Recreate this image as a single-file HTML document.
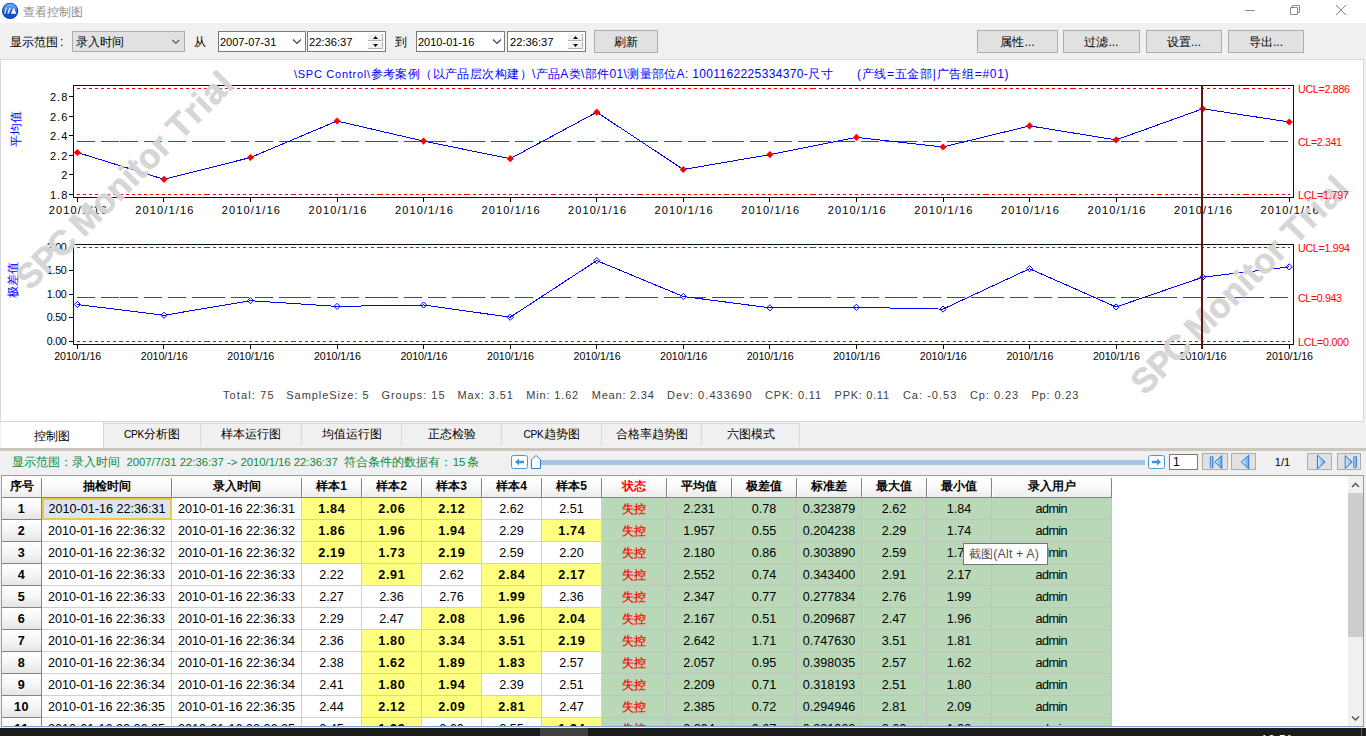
<!DOCTYPE html>
<html lang="zh"><head><meta charset="utf-8"><title>查看控制图</title>
<style>
*{box-sizing:border-box}
html,body{margin:0;padding:0}
body{width:1366px;height:736px;overflow:hidden;background:#f0f0f0;position:relative;font-family:"Liberation Sans",sans-serif;font-size:12px;color:#000}
.abs{position:absolute}
.t{position:absolute;white-space:nowrap;line-height:14px;height:14px}
.btn{position:absolute;background:#e1e1e1;border:1px solid #adadad;text-align:center;white-space:nowrap}
.inp{position:absolute;background:#fff;border:1px solid #7a7a7a;white-space:nowrap}
.tab{position:absolute;top:423px;height:23px;border-top:1px solid #d9d9d9;border-right:1px solid #d9d9d9;text-align:center;line-height:21px;white-space:nowrap}
.hc{position:absolute;top:476px;height:22px;padding-right:1px;border-bottom:1px solid #848484;background:linear-gradient(#ffffff 0%,#fbfbfb 45%,#ececec 100%);text-align:center;font-weight:bold;line-height:20px;white-space:nowrap;box-shadow:inset 1px 0 0 #fff}
.hc::after{content:'';position:absolute;right:0;top:2px;bottom:0;width:1px;background:#848484}
.c{position:absolute;height:22px;border-right:1px solid #d0d0d0;border-bottom:1px solid #d0d0d0;text-align:center;line-height:23px;white-space:nowrap;background:#fff;font-size:12.6px}
.c.y{background:#ffff80;font-weight:bold;letter-spacing:.7px;padding-left:.7px}
.c.g{background:#b8d8b8;border-color:#c4c2c2}
.c.r{color:#ff0000;font-size:12px;-webkit-text-stroke:.25px #ff0000}
.c.rh{background:linear-gradient(#ffffff 0%,#f6f6f6 50%,#e6e6e6 100%);border-right:1px solid #848484;border-bottom:1px solid #848484;font-weight:bold;letter-spacing:.5px}
.c.sel{background:#dce6f2;border:2px solid #f0c840;line-height:19px}
</style></head><body>

<div class="abs" style="left:0;top:0;width:1366px;height:23px;background:#fff"></div>
<svg class="abs" style="left:0;top:0" width="24" height="23" viewBox="0 0 24 23">
<defs><linearGradient id="ig" x1="0" y1="0" x2="0" y2="1"><stop offset="0" stop-color="#7fb0f6"/><stop offset=".45" stop-color="#2f72e2"/><stop offset=".62" stop-color="#0a4fd2"/><stop offset="1" stop-color="#0a44c0"/></linearGradient>
<clipPath id="ic"><circle cx="10.1" cy="10.9" r="7.6"/></clipPath></defs>
<circle cx="10.1" cy="10.9" r="8.1" fill="#0b3c9e"/>
<circle cx="10.1" cy="10.9" r="7.3" fill="url(#ig)"/>
<rect x="2" y="13.8" width="17" height="6" fill="#0a50d4" clip-path="url(#ic)"/>
<path d="M4 13.8L5.9 7.8H7L5.3 13.8Z M7.2 13.8L9.3 7.8H10.9L8.8 13.8Z" fill="#e9f0fb"/>
<path d="M10.8 13.8L13.75 7.6L16.3 13.8Z" fill="#ffffff"/>
</svg>
<div class="t" style="left:23px;top:4.8px;color:#8e8e8e;font-size:12px">查看控制图</div>
<svg class="abs" style="left:1240px;top:0" width="126" height="23" viewBox="1240 0 126 23" fill="none" stroke="#8a8a8a" stroke-width="1">
<path d="M1245 10.5H1255"/>
<path d="M1290.5 7.5h7v7h-7z M1292.5 7.5v-2h7v7h-2"/>
<path d="M1336 5L1346 15M1346 5L1336 15"/>
</svg>
<div class="t" style="left:10px;top:35px;font-size:12px">显示范围<span style="margin-left:2px">:</span></div>
<div class="btn" style="left:72px;top:31px;width:113px;height:21px;text-align:left;padding-left:3px;line-height:21px">录入时间</div>
<div class="t" style="left:194px;top:35px">从</div>
<div class="inp" style="left:218px;top:31px;width:88px;height:21px;padding-left:1px;line-height:21px;font-size:11px">2007-07-31</div>
<div class="inp" style="left:307px;top:31px;width:79px;height:21px;padding-left:1px;line-height:21px;font-size:11.2px">22:36:37</div>
<div class="t" style="left:395px;top:35px">到</div>
<div class="inp" style="left:416px;top:31px;width:89px;height:21px;padding-left:1px;line-height:21px;font-size:11px">2010-01-16</div>
<div class="inp" style="left:507px;top:31px;width:79px;height:21px;padding-left:2px;line-height:21px;font-size:11.2px">22:36:37</div>
<div class="btn" style="left:594px;top:30px;width:64px;height:23px;line-height:23px">刷新</div>
<div class="btn" style="left:977px;top:30px;width:81px;height:23px;line-height:23px">属性...</div>
<div class="btn" style="left:1063px;top:30px;width:77px;height:23px;line-height:23px">过滤...</div>
<div class="btn" style="left:1146px;top:30px;width:76px;height:23px;line-height:23px">设置...</div>
<div class="btn" style="left:1228px;top:30px;width:76px;height:23px;line-height:23px">导出...</div>
<svg class="abs" style="left:0;top:23px" width="700" height="36" viewBox="0 23 700 36" fill="none">
<path d="M172.3 39.8l3.5 3.5l3.5-3.5" stroke="#444" stroke-width="1.15"/>
<path d="M293 39.5l4 4l4-4" stroke="#444" stroke-width="1.15"/>
<path d="M493 39.5l4 4l4-4" stroke="#444" stroke-width="1.15"/>
<g shape-rendering="crispEdges">
<rect x="368" y="34" width="15" height="7" fill="#f0f0f0"/><path d="M368 40.5h15M382.5 34v7" stroke="#b0b0b0"/>
<rect x="368" y="42" width="15" height="7" fill="#f0f0f0"/><path d="M368 48.5h15M382.5 42v7" stroke="#b0b0b0"/>
<rect x="568" y="34" width="15" height="7" fill="#f0f0f0"/><path d="M568 40.5h15M582.5 34v7" stroke="#b0b0b0"/>
<rect x="568" y="42" width="15" height="7" fill="#f0f0f0"/><path d="M568 48.5h15M582.5 42v7" stroke="#b0b0b0"/>
</g><g>
<path d="M373 39l2.5-3l2.5 3z M373 44l2.5 3l2.5-3z" fill="#111"/>
<path d="M573 39l2.5-3l2.5 3z M573 44l2.5 3l2.5-3z" fill="#111"/>
</g>
</svg>
<div class="abs" style="left:0;top:59px;width:1364px;height:363px;background:#fff;border:1px solid #d9d9d9"></div>
<svg class="abs" style="left:0;top:60px" width="1366" height="361" viewBox="0 60 1366 361" font-family='"Liberation Sans", sans-serif'>
<text x="294.0" y="77.7" font-size="11.00" fill="#0000ff" text-anchor="start" textLength="76.0" lengthAdjust="spacing" >\SPC Control\</text>
<text x="370.5" y="78.0" font-size="12.00" fill="#0000ff" text-anchor="start" textLength="161.0" lengthAdjust="spacing" >参考案例（以产品层次构建）</text>
<text x="532.0" y="78.0" font-size="12.00" fill="#0000ff" text-anchor="start" textLength="300.5" lengthAdjust="spacing" >\产品A类\部件01\测量部位A: 1001162225334370-尺寸</text>
<text x="857.0" y="78.0" font-size="12.00" fill="#0000ff" text-anchor="start" textLength="151.5" lengthAdjust="spacing" >(产线=五金部|广告组=#01)</text>
<rect x="73.5" y="85.5" width="1220" height="112.0" fill="none" stroke="#111" stroke-width="1" shape-rendering="crispEdges"/>
<path d="M69 96.5H73" stroke="#000" stroke-width="1" shape-rendering="crispEdges"/>
<text x="67.3" y="101.2" font-size="11.00" fill="#000" text-anchor="end" textLength="17.3" lengthAdjust="spacing" >2.8</text>
<path d="M69 116.5H73" stroke="#000" stroke-width="1" shape-rendering="crispEdges"/>
<text x="67.3" y="121.2" font-size="11.00" fill="#000" text-anchor="end" textLength="17.3" lengthAdjust="spacing" >2.6</text>
<path d="M69 135.5H73" stroke="#000" stroke-width="1" shape-rendering="crispEdges"/>
<text x="67.3" y="140.2" font-size="11.00" fill="#000" text-anchor="end" textLength="17.3" lengthAdjust="spacing" >2.4</text>
<path d="M69 155.5H73" stroke="#000" stroke-width="1" shape-rendering="crispEdges"/>
<text x="67.3" y="160.2" font-size="11.00" fill="#000" text-anchor="end" textLength="17.3" lengthAdjust="spacing" >2.2</text>
<path d="M69 174.5H73" stroke="#000" stroke-width="1" shape-rendering="crispEdges"/>
<text x="67.3" y="179.2" font-size="11.00" fill="#000" text-anchor="end" textLength="6.5" lengthAdjust="spacing" >2</text>
<path d="M69 194.5H73" stroke="#000" stroke-width="1" shape-rendering="crispEdges"/>
<text x="67.3" y="199.2" font-size="11.00" fill="#000" text-anchor="end" textLength="17.3" lengthAdjust="spacing" >1.8</text>
<path d="M77.5 198.0V202.0" stroke="#000" stroke-width="1" shape-rendering="crispEdges"/>
<text x="77.7" y="214.0" font-size="11.00" text-anchor="middle" textLength="58.0" lengthAdjust="spacing">2010/1/16</text>
<path d="M163.5 198.0V202.0" stroke="#000" stroke-width="1" shape-rendering="crispEdges"/>
<text x="164.3" y="214.0" font-size="11.00" text-anchor="middle" textLength="58.0" lengthAdjust="spacing">2010/1/16</text>
<path d="M250.5 198.0V202.0" stroke="#000" stroke-width="1" shape-rendering="crispEdges"/>
<text x="250.8" y="214.0" font-size="11.00" text-anchor="middle" textLength="58.0" lengthAdjust="spacing">2010/1/16</text>
<path d="M337.5 198.0V202.0" stroke="#000" stroke-width="1" shape-rendering="crispEdges"/>
<text x="337.4" y="214.0" font-size="11.00" text-anchor="middle" textLength="58.0" lengthAdjust="spacing">2010/1/16</text>
<path d="M423.5 198.0V202.0" stroke="#000" stroke-width="1" shape-rendering="crispEdges"/>
<text x="423.9" y="214.0" font-size="11.00" text-anchor="middle" textLength="58.0" lengthAdjust="spacing">2010/1/16</text>
<path d="M510.5 198.0V202.0" stroke="#000" stroke-width="1" shape-rendering="crispEdges"/>
<text x="510.5" y="214.0" font-size="11.00" text-anchor="middle" textLength="58.0" lengthAdjust="spacing">2010/1/16</text>
<path d="M596.5 198.0V202.0" stroke="#000" stroke-width="1" shape-rendering="crispEdges"/>
<text x="597.1" y="214.0" font-size="11.00" text-anchor="middle" textLength="58.0" lengthAdjust="spacing">2010/1/16</text>
<path d="M683.5 198.0V202.0" stroke="#000" stroke-width="1" shape-rendering="crispEdges"/>
<text x="683.6" y="214.0" font-size="11.00" text-anchor="middle" textLength="58.0" lengthAdjust="spacing">2010/1/16</text>
<path d="M769.5 198.0V202.0" stroke="#000" stroke-width="1" shape-rendering="crispEdges"/>
<text x="770.2" y="214.0" font-size="11.00" text-anchor="middle" textLength="58.0" lengthAdjust="spacing">2010/1/16</text>
<path d="M856.5 198.0V202.0" stroke="#000" stroke-width="1" shape-rendering="crispEdges"/>
<text x="856.7" y="214.0" font-size="11.00" text-anchor="middle" textLength="58.0" lengthAdjust="spacing">2010/1/16</text>
<path d="M943.5 198.0V202.0" stroke="#000" stroke-width="1" shape-rendering="crispEdges"/>
<text x="943.3" y="214.0" font-size="11.00" text-anchor="middle" textLength="58.0" lengthAdjust="spacing">2010/1/16</text>
<path d="M1029.5 198.0V202.0" stroke="#000" stroke-width="1" shape-rendering="crispEdges"/>
<text x="1029.9" y="214.0" font-size="11.00" text-anchor="middle" textLength="58.0" lengthAdjust="spacing">2010/1/16</text>
<path d="M1116.5 198.0V202.0" stroke="#000" stroke-width="1" shape-rendering="crispEdges"/>
<text x="1116.4" y="214.0" font-size="11.00" text-anchor="middle" textLength="58.0" lengthAdjust="spacing">2010/1/16</text>
<path d="M1202.5 198.0V202.0" stroke="#000" stroke-width="1" shape-rendering="crispEdges"/>
<text x="1203.0" y="214.0" font-size="11.00" text-anchor="middle" textLength="58.0" lengthAdjust="spacing">2010/1/16</text>
<path d="M1289.5 198.0V202.0" stroke="#000" stroke-width="1" shape-rendering="crispEdges"/>
<text x="1289.5" y="214.0" font-size="11.00" text-anchor="middle" textLength="58.0" lengthAdjust="spacing">2010/1/16</text>
<path d="M77.4 88.5H120.3M120.3 88.5H206.9M206.9 88.5H293.4M293.4 88.5H380.0M380.0 88.5H466.5M466.5 88.5H553.1M553.1 88.5H639.7M639.7 88.5H726.2M726.2 88.5H812.8M812.8 88.5H899.3M899.3 88.5H985.9M985.9 88.5H1072.5M1072.5 88.5H1159.0M1159.0 88.5H1245.6M1245.6 88.5H1289.6" stroke="#ff0000" stroke-width="1" stroke-dasharray="3 3" shape-rendering="crispEdges" fill="none"/>
<path d="M77.4 194.5H120.3M120.3 194.5H206.9M206.9 194.5H293.4M293.4 194.5H380.0M380.0 194.5H466.5M466.5 194.5H553.1M553.1 194.5H639.7M639.7 194.5H726.2M726.2 194.5H812.8M812.8 194.5H899.3M899.3 194.5H985.9M985.9 194.5H1072.5M1072.5 194.5H1159.0M1159.0 194.5H1245.6M1245.6 194.5H1289.6" stroke="#ff0000" stroke-width="1" stroke-dasharray="3 3" shape-rendering="crispEdges" fill="none"/>
<path d="M77.4 141.5H120.3M120.3 141.5H206.9M206.9 141.5H293.4M293.4 141.5H380.0M380.0 141.5H466.5M466.5 141.5H553.1M553.1 141.5H639.7M639.7 141.5H726.2M726.2 141.5H812.8M812.8 141.5H899.3M899.3 141.5H985.9M985.9 141.5H1072.5M1072.5 141.5H1159.0M1159.0 141.5H1245.6M1245.6 141.5H1289.6" stroke="#ff0000" stroke-width="1" stroke-dasharray="18 6" shape-rendering="crispEdges" fill="none"/>
<path d="M77.4 152.5 L164.0 179.3 L250.5 157.5 L337.1 121.0 L423.6 141.1 L510.2 158.7 L596.8 112.2 L683.3 169.5 L769.9 154.6 L856.4 137.4 L943.0 147.0 L1029.6 125.9 L1116.1 139.9 L1202.7 108.8 L1289.2 122.0" fill="none" stroke="#0000ff" stroke-width="1" shape-rendering="crispEdges"/>
<path d="M77.4 148.9l3.6 3.6l-3.6 3.6l-3.6-3.6z" fill="#ff0000"/>
<path d="M164.0 175.7l3.6 3.6l-3.6 3.6l-3.6-3.6z" fill="#ff0000"/>
<path d="M250.5 153.9l3.6 3.6l-3.6 3.6l-3.6-3.6z" fill="#ff0000"/>
<path d="M337.1 117.4l3.6 3.6l-3.6 3.6l-3.6-3.6z" fill="#ff0000"/>
<path d="M423.6 137.5l3.6 3.6l-3.6 3.6l-3.6-3.6z" fill="#ff0000"/>
<path d="M510.2 155.1l3.6 3.6l-3.6 3.6l-3.6-3.6z" fill="#ff0000"/>
<path d="M596.8 108.6l3.6 3.6l-3.6 3.6l-3.6-3.6z" fill="#ff0000"/>
<path d="M683.3 165.9l3.6 3.6l-3.6 3.6l-3.6-3.6z" fill="#ff0000"/>
<path d="M769.9 151.0l3.6 3.6l-3.6 3.6l-3.6-3.6z" fill="#ff0000"/>
<path d="M856.4 133.8l3.6 3.6l-3.6 3.6l-3.6-3.6z" fill="#ff0000"/>
<path d="M943.0 143.4l3.6 3.6l-3.6 3.6l-3.6-3.6z" fill="#ff0000"/>
<path d="M1029.6 122.3l3.6 3.6l-3.6 3.6l-3.6-3.6z" fill="#ff0000"/>
<path d="M1116.1 136.3l3.6 3.6l-3.6 3.6l-3.6-3.6z" fill="#ff0000"/>
<path d="M1202.7 105.2l3.6 3.6l-3.6 3.6l-3.6-3.6z" fill="#ff0000"/>
<path d="M1289.2 118.4l3.6 3.6l-3.6 3.6l-3.6-3.6z" fill="#ff0000"/>
<rect x="73.5" y="244.5" width="1220" height="100.0" fill="none" stroke="#111" stroke-width="1" shape-rendering="crispEdges"/>
<path d="M69 247.5H73" stroke="#000" stroke-width="1" shape-rendering="crispEdges"/>
<text x="66.8" y="251.3" font-size="10.67" fill="#000" text-anchor="end" textLength="20.0" lengthAdjust="spacing" >2.00</text>
<path d="M69 270.5H73" stroke="#000" stroke-width="1" shape-rendering="crispEdges"/>
<text x="66.8" y="274.3" font-size="10.67" fill="#000" text-anchor="end" textLength="20.0" lengthAdjust="spacing" >1.50</text>
<path d="M69 294.5H73" stroke="#000" stroke-width="1" shape-rendering="crispEdges"/>
<text x="66.8" y="298.3" font-size="10.67" fill="#000" text-anchor="end" textLength="20.0" lengthAdjust="spacing" >1.00</text>
<path d="M69 317.5H73" stroke="#000" stroke-width="1" shape-rendering="crispEdges"/>
<text x="66.8" y="321.3" font-size="10.67" fill="#000" text-anchor="end" textLength="20.0" lengthAdjust="spacing" >0.50</text>
<path d="M69 341.5H73" stroke="#000" stroke-width="1" shape-rendering="crispEdges"/>
<text x="66.8" y="345.3" font-size="10.67" fill="#000" text-anchor="end" textLength="20.0" lengthAdjust="spacing" >0.00</text>
<path d="M77.5 345.0V349.0" stroke="#000" stroke-width="1" shape-rendering="crispEdges"/>
<text x="77.7" y="360.4" font-size="10.67" text-anchor="middle" textLength="47.0" lengthAdjust="spacing">2010/1/16</text>
<path d="M163.5 345.0V349.0" stroke="#000" stroke-width="1" shape-rendering="crispEdges"/>
<text x="164.3" y="360.4" font-size="10.67" text-anchor="middle" textLength="47.0" lengthAdjust="spacing">2010/1/16</text>
<path d="M250.5 345.0V349.0" stroke="#000" stroke-width="1" shape-rendering="crispEdges"/>
<text x="250.8" y="360.4" font-size="10.67" text-anchor="middle" textLength="47.0" lengthAdjust="spacing">2010/1/16</text>
<path d="M337.5 345.0V349.0" stroke="#000" stroke-width="1" shape-rendering="crispEdges"/>
<text x="337.4" y="360.4" font-size="10.67" text-anchor="middle" textLength="47.0" lengthAdjust="spacing">2010/1/16</text>
<path d="M423.5 345.0V349.0" stroke="#000" stroke-width="1" shape-rendering="crispEdges"/>
<text x="423.9" y="360.4" font-size="10.67" text-anchor="middle" textLength="47.0" lengthAdjust="spacing">2010/1/16</text>
<path d="M510.5 345.0V349.0" stroke="#000" stroke-width="1" shape-rendering="crispEdges"/>
<text x="510.5" y="360.4" font-size="10.67" text-anchor="middle" textLength="47.0" lengthAdjust="spacing">2010/1/16</text>
<path d="M596.5 345.0V349.0" stroke="#000" stroke-width="1" shape-rendering="crispEdges"/>
<text x="597.1" y="360.4" font-size="10.67" text-anchor="middle" textLength="47.0" lengthAdjust="spacing">2010/1/16</text>
<path d="M683.5 345.0V349.0" stroke="#000" stroke-width="1" shape-rendering="crispEdges"/>
<text x="683.6" y="360.4" font-size="10.67" text-anchor="middle" textLength="47.0" lengthAdjust="spacing">2010/1/16</text>
<path d="M769.5 345.0V349.0" stroke="#000" stroke-width="1" shape-rendering="crispEdges"/>
<text x="770.2" y="360.4" font-size="10.67" text-anchor="middle" textLength="47.0" lengthAdjust="spacing">2010/1/16</text>
<path d="M856.5 345.0V349.0" stroke="#000" stroke-width="1" shape-rendering="crispEdges"/>
<text x="856.7" y="360.4" font-size="10.67" text-anchor="middle" textLength="47.0" lengthAdjust="spacing">2010/1/16</text>
<path d="M943.5 345.0V349.0" stroke="#000" stroke-width="1" shape-rendering="crispEdges"/>
<text x="943.3" y="360.4" font-size="10.67" text-anchor="middle" textLength="47.0" lengthAdjust="spacing">2010/1/16</text>
<path d="M1029.5 345.0V349.0" stroke="#000" stroke-width="1" shape-rendering="crispEdges"/>
<text x="1029.9" y="360.4" font-size="10.67" text-anchor="middle" textLength="47.0" lengthAdjust="spacing">2010/1/16</text>
<path d="M1116.5 345.0V349.0" stroke="#000" stroke-width="1" shape-rendering="crispEdges"/>
<text x="1116.4" y="360.4" font-size="10.67" text-anchor="middle" textLength="47.0" lengthAdjust="spacing">2010/1/16</text>
<path d="M1202.5 345.0V349.0" stroke="#000" stroke-width="1" shape-rendering="crispEdges"/>
<text x="1203.0" y="360.4" font-size="10.67" text-anchor="middle" textLength="47.0" lengthAdjust="spacing">2010/1/16</text>
<path d="M1289.5 345.0V349.0" stroke="#000" stroke-width="1" shape-rendering="crispEdges"/>
<text x="1289.5" y="360.4" font-size="10.67" text-anchor="middle" textLength="47.0" lengthAdjust="spacing">2010/1/16</text>
<path d="M77.4 247.5H120.3M120.3 247.5H206.9M206.9 247.5H293.4M293.4 247.5H380.0M380.0 247.5H466.5M466.5 247.5H553.1M553.1 247.5H639.7M639.7 247.5H726.2M726.2 247.5H812.8M812.8 247.5H899.3M899.3 247.5H985.9M985.9 247.5H1072.5M1072.5 247.5H1159.0M1159.0 247.5H1245.6M1245.6 247.5H1289.6" stroke="#ff0000" stroke-width="1" stroke-dasharray="3 3" shape-rendering="crispEdges" fill="none"/>
<path d="M77.4 341.5H120.3M120.3 341.5H206.9M206.9 341.5H293.4M293.4 341.5H380.0M380.0 341.5H466.5M466.5 341.5H553.1M553.1 341.5H639.7M639.7 341.5H726.2M726.2 341.5H812.8M812.8 341.5H899.3M899.3 341.5H985.9M985.9 341.5H1072.5M1072.5 341.5H1159.0M1159.0 341.5H1245.6M1245.6 341.5H1289.6" stroke="#ff0000" stroke-width="1" stroke-dasharray="3 3" shape-rendering="crispEdges" fill="none"/>
<path d="M77.4 297.5H120.3M120.3 297.5H206.9M206.9 297.5H293.4M293.4 297.5H380.0M380.0 297.5H466.5M466.5 297.5H553.1M553.1 297.5H639.7M639.7 297.5H726.2M726.2 297.5H812.8M812.8 297.5H899.3M899.3 297.5H985.9M985.9 297.5H1072.5M1072.5 297.5H1159.0M1159.0 297.5H1245.6M1245.6 297.5H1289.6" stroke="#ff0000" stroke-width="1" stroke-dasharray="18 6" shape-rendering="crispEdges" fill="none"/>
<path d="M77.4 304.5 L164.0 315.3 L250.5 300.7 L337.1 306.4 L423.6 305.0 L510.2 317.2 L596.8 260.6 L683.3 296.5 L769.9 307.8 L856.4 307.3 L943.0 309.1 L1029.6 268.7 L1116.1 307.0 L1202.7 277.2 L1289.2 266.9" fill="none" stroke="#0000ff" stroke-width="1" shape-rendering="crispEdges"/>
<path d="M77.4 301.4l3.1 3.1l-3.1 3.1l-3.1-3.1z" fill="none" stroke="#0000ff" stroke-width="1"/>
<path d="M164.0 312.2l3.1 3.1l-3.1 3.1l-3.1-3.1z" fill="none" stroke="#0000ff" stroke-width="1"/>
<path d="M250.5 297.6l3.1 3.1l-3.1 3.1l-3.1-3.1z" fill="none" stroke="#0000ff" stroke-width="1"/>
<path d="M337.1 303.3l3.1 3.1l-3.1 3.1l-3.1-3.1z" fill="none" stroke="#0000ff" stroke-width="1"/>
<path d="M423.6 301.9l3.1 3.1l-3.1 3.1l-3.1-3.1z" fill="none" stroke="#0000ff" stroke-width="1"/>
<path d="M510.2 314.1l3.1 3.1l-3.1 3.1l-3.1-3.1z" fill="none" stroke="#0000ff" stroke-width="1"/>
<path d="M596.8 257.5l3.1 3.1l-3.1 3.1l-3.1-3.1z" fill="none" stroke="#0000ff" stroke-width="1"/>
<path d="M683.3 293.4l3.1 3.1l-3.1 3.1l-3.1-3.1z" fill="none" stroke="#0000ff" stroke-width="1"/>
<path d="M769.9 304.7l3.1 3.1l-3.1 3.1l-3.1-3.1z" fill="none" stroke="#0000ff" stroke-width="1"/>
<path d="M856.4 304.2l3.1 3.1l-3.1 3.1l-3.1-3.1z" fill="none" stroke="#0000ff" stroke-width="1"/>
<path d="M943.0 306.0l3.1 3.1l-3.1 3.1l-3.1-3.1z" fill="none" stroke="#0000ff" stroke-width="1"/>
<path d="M1029.6 265.6l3.1 3.1l-3.1 3.1l-3.1-3.1z" fill="none" stroke="#0000ff" stroke-width="1"/>
<path d="M1116.1 303.9l3.1 3.1l-3.1 3.1l-3.1-3.1z" fill="none" stroke="#0000ff" stroke-width="1"/>
<path d="M1202.7 274.1l3.1 3.1l-3.1 3.1l-3.1-3.1z" fill="none" stroke="#0000ff" stroke-width="1"/>
<path d="M1289.2 263.8l3.1 3.1l-3.1 3.1l-3.1-3.1z" fill="none" stroke="#0000ff" stroke-width="1"/>
<text transform="translate(19.5 128.5) rotate(-90)" font-size="12" fill="#0000ff" text-anchor="middle" textLength="36" lengthAdjust="spacing">平均值</text>
<text transform="translate(16.5 280) rotate(-90)" font-size="12" fill="#0000ff" text-anchor="middle" textLength="36" lengthAdjust="spacing">极差值</text>
<text x="222.9" y="399.0" font-size="11.00" fill="#404040" text-anchor="start" textLength="50.6" lengthAdjust="spacing" >Total: 75</text>
<text x="286.3" y="399.0" font-size="11.00" fill="#404040" text-anchor="start" textLength="82.2" lengthAdjust="spacing" >SampleSize: 5</text>
<text x="381.4" y="399.0" font-size="11.00" fill="#404040" text-anchor="start" textLength="63.1" lengthAdjust="spacing" >Groups: 15</text>
<text x="457.4" y="399.0" font-size="11.00" fill="#404040" text-anchor="start" textLength="55.4" lengthAdjust="spacing" >Max: 3.51</text>
<text x="526.3" y="399.0" font-size="11.00" fill="#404040" text-anchor="start" textLength="51.9" lengthAdjust="spacing" >Min: 1.62</text>
<text x="591.7" y="399.0" font-size="11.00" fill="#404040" text-anchor="start" textLength="62.2" lengthAdjust="spacing" >Mean: 2.34</text>
<text x="667.1" y="399.0" font-size="11.00" fill="#404040" text-anchor="start" textLength="84.4" lengthAdjust="spacing" >Dev: 0.433690</text>
<text x="765.0" y="399.0" font-size="11.00" fill="#404040" text-anchor="start" textLength="56.0" lengthAdjust="spacing" >CPK: 0.11</text>
<text x="834.6" y="399.0" font-size="11.00" fill="#404040" text-anchor="start" textLength="54.4" lengthAdjust="spacing" >PPK: 0.11</text>
<text x="902.9" y="399.0" font-size="11.00" fill="#404040" text-anchor="start" textLength="53.4" lengthAdjust="spacing" >Ca: -0.53</text>
<text x="969.9" y="399.0" font-size="11.00" fill="#404040" text-anchor="start" textLength="48.3" lengthAdjust="spacing" >Cp: 0.23</text>
<text x="1031.4" y="399.0" font-size="11.00" fill="#404040" text-anchor="start" textLength="47.0" lengthAdjust="spacing" >Pp: 0.23</text>
<text transform="translate(26.5 295.1) rotate(-45)" x="5.0 28.1 49.2 71.1 80.8 109.6 130.7 151.9 161.5 173.0 194.1 207.6 217.7 240.4 255.3 265.9 286.1" y="0" font-size="34.6" font-weight="bold" fill="#d5d5d5" stroke="#d5d5d5" stroke-width=".6" opacity=".97">SPC Monitor Trial</text>
<text transform="translate(1141.5 399.8) rotate(-45)" x="5.0 28.1 49.2 71.1 80.8 109.6 130.7 151.9 161.5 173.0 194.1 207.6 217.7 240.4 255.3 265.9 286.1" y="0" font-size="34.6" font-weight="bold" fill="#d5d5d5" stroke="#d5d5d5" stroke-width=".6" opacity=".97">SPC Monitor Trial</text>
<text x="1298.0" y="92.8" font-size="10.67" fill="#ff0000" text-anchor="start" textLength="52.0" lengthAdjust="spacing" >UCL=2.886</text>
<text x="1298.0" y="145.8" font-size="10.67" fill="#ff0000" text-anchor="start" textLength="44.0" lengthAdjust="spacing" >CL=2.341</text>
<text x="1298.0" y="198.8" font-size="10.67" fill="#ff0000" text-anchor="start" textLength="51.0" lengthAdjust="spacing" >LCL=1.797</text>
<text x="1298.0" y="251.8" font-size="10.67" fill="#ff0000" text-anchor="start" textLength="52.0" lengthAdjust="spacing" >UCL=1.994</text>
<text x="1298.0" y="301.8" font-size="10.67" fill="#ff0000" text-anchor="start" textLength="44.0" lengthAdjust="spacing" >CL=0.943</text>
<text x="1298.0" y="345.8" font-size="10.67" fill="#ff0000" text-anchor="start" textLength="51.0" lengthAdjust="spacing" >LCL=0.000</text>
<rect x="1201" y="85" width="2" height="264" fill="#6b0f0f" shape-rendering="crispEdges"/>
</svg>
<div class="abs" style="left:1px;top:422px;width:103px;height:26px;background:#fff;border-right:1px solid #d9d9d9;text-align:center;line-height:28px">控制图</div>
<div class="tab" style="left:104px;width:97px"><span style="font-size:10.2px;letter-spacing:-.3px">CPK</span>分析图</div>
<div class="tab" style="left:201px;width:101px">样本运行图</div>
<div class="tab" style="left:302px;width:100px">均值运行图</div>
<div class="tab" style="left:402px;width:100px">正态检验</div>
<div class="tab" style="left:502px;width:100px"><span style="font-size:10.2px;letter-spacing:-.3px">CPK</span>趋势图</div>
<div class="tab" style="left:602px;width:100px">合格率趋势图</div>
<div class="tab" style="left:702px;width:98px">六图模式</div>
<div class="abs" style="left:0;top:448px;width:1366px;height:3px;background:#cbc7bc"></div>
<div class="t" style="left:12.0px;top:455px;color:#0a8a43;font-size:12.0px">显示范围：录入时间</div>
<div class="t" style="left:126.4px;top:455px;color:#0a8a43;font-size:11.3px">2007/7/31 22:36:37 -&gt; 2010/1/16 22:36:37</div>
<div class="t" style="left:343.7px;top:455px;color:#0a8a43;font-size:12.0px">符合条件的数据有：</div>
<div class="t" style="left:452.7px;top:455px;color:#0a8a43;font-size:11.3px">15</div>
<div class="t" style="left:467.0px;top:455px;color:#0a8a43;font-size:12.0px">条</div>
<svg class="abs" style="left:500px;top:451px" width="866" height="24" viewBox="500 451 866 24">
<defs><linearGradient id="bg1" x1="0" y1="0" x2="1" y2="0"><stop offset="0" stop-color="#e4f0fc"/><stop offset="1" stop-color="#5fa6f2"/></linearGradient></defs>
<rect x="541" y="460" width="604" height="5" fill="#a6c4e4" shape-rendering="crispEdges"/>
<rect x="511.5" y="455.5" width="16" height="13" rx="2" fill="#fff" stroke="#4a9ad4"/>
<path d="M515 462l4-3.5v2.2h5v2.6h-5v2.2z" fill="#3f94d1"/>
<path d="M531.5 468.5v-9l4.5-4l4.5 4v9z" fill="#fff" stroke="#3c7fc0"/>
<rect x="1148.5" y="455.5" width="16" height="13" rx="2" fill="#fff" stroke="#4a9ad4"/>
<path d="M1161 462l-4-3.5v2.2h-5v2.6h5v2.2z" fill="#3f94d1"/>
<rect x="1169.5" y="454.5" width="28" height="15" fill="#fff" stroke="#7a7a7a" shape-rendering="crispEdges"/>
<g shape-rendering="crispEdges" fill="#e1e1e1" stroke="#adadad">
<rect x="1202.5" y="453.5" width="25" height="16"/><rect x="1231.5" y="453.5" width="24" height="16"/>
<rect x="1307.5" y="453.5" width="24" height="16"/><rect x="1337.5" y="453.5" width="23" height="16"/></g>
<g fill="url(#bg1)" stroke="#2b77d6" stroke-width="1" stroke-linejoin="round">
<rect x="1210.3" y="456.3" width="2.6" height="11.4" rx="1"/><path d="M1214.8 462l7-6.4v12.8z"/>
<path d="M1241.2 462l7.6-6.9v13.8z"/>
<path d="M1325 462l-7.6-6.9v13.8z"/>
<path d="M1352.2 462l-7-6.4v12.8z"/><rect x="1353.8" y="456.3" width="2.6" height="11.4" rx="1"/>
</g>
</svg>
<div class="t" style="left:1173px;top:455px;font-size:12px">1</div>
<div class="t" style="left:1274.8px;top:455px;font-size:11px">1/1</div>
<div class="abs" style="left:1px;top:475px;width:1363px;height:252px;background:#fff;border:1px solid #7fa2cc"></div>
<div class="hc" style="left:2px;width:40px">序号</div>
<div class="hc" style="left:42px;width:130px">抽检时间</div>
<div class="hc" style="left:172px;width:130px">录入时间</div>
<div class="hc" style="left:302px;width:60px">样本1</div>
<div class="hc" style="left:362px;width:60px">样本2</div>
<div class="hc" style="left:422px;width:60px">样本3</div>
<div class="hc" style="left:482px;width:60px">样本4</div>
<div class="hc" style="left:542px;width:60px">样本5</div>
<div class="hc" style="left:602px;width:65px;color:#ff0000">状态</div>
<div class="hc" style="left:667px;width:65px">平均值</div>
<div class="hc" style="left:732px;width:65px">极差值</div>
<div class="hc" style="left:797px;width:65px">标准差</div>
<div class="hc" style="left:862px;width:65px">最大值</div>
<div class="hc" style="left:927px;width:65px">最小值</div>
<div class="hc" style="left:992px;width:120px">录入用户</div>
<div class="abs" style="left:2px;top:498px;width:1346px;height:228px;overflow:hidden">
<div class="c rh" style="left:0px;top:0px;width:40px">1</div>
<div class="c sel" style="left:40px;top:0px;width:130px">2010-01-16 22:36:31</div>
<div class="c " style="left:170px;top:0px;width:130px">2010-01-16 22:36:31</div>
<div class="c y" style="left:300px;top:0px;width:60px">1.84</div>
<div class="c y" style="left:360px;top:0px;width:60px">2.06</div>
<div class="c y" style="left:420px;top:0px;width:60px">2.12</div>
<div class="c " style="left:480px;top:0px;width:60px">2.62</div>
<div class="c " style="left:540px;top:0px;width:60px">2.51</div>
<div class="c g r" style="left:600px;top:0px;width:65px">失控</div>
<div class="c g" style="left:665px;top:0px;width:65px">2.231</div>
<div class="c g" style="left:730px;top:0px;width:65px">0.78</div>
<div class="c g" style="left:795px;top:0px;width:65px">0.323879</div>
<div class="c g" style="left:860px;top:0px;width:65px">2.62</div>
<div class="c g" style="left:925px;top:0px;width:65px">1.84</div>
<div class="c g" style="left:990px;top:0px;width:120px"><span style="letter-spacing:-.55px;margin-left:-.5px">admin</span></div>
<div class="c rh" style="left:0px;top:22px;width:40px">2</div>
<div class="c " style="left:40px;top:22px;width:130px">2010-01-16 22:36:32</div>
<div class="c " style="left:170px;top:22px;width:130px">2010-01-16 22:36:32</div>
<div class="c y" style="left:300px;top:22px;width:60px">1.86</div>
<div class="c y" style="left:360px;top:22px;width:60px">1.96</div>
<div class="c y" style="left:420px;top:22px;width:60px">1.94</div>
<div class="c " style="left:480px;top:22px;width:60px">2.29</div>
<div class="c y" style="left:540px;top:22px;width:60px">1.74</div>
<div class="c g r" style="left:600px;top:22px;width:65px">失控</div>
<div class="c g" style="left:665px;top:22px;width:65px">1.957</div>
<div class="c g" style="left:730px;top:22px;width:65px">0.55</div>
<div class="c g" style="left:795px;top:22px;width:65px">0.204238</div>
<div class="c g" style="left:860px;top:22px;width:65px">2.29</div>
<div class="c g" style="left:925px;top:22px;width:65px">1.74</div>
<div class="c g" style="left:990px;top:22px;width:120px"><span style="letter-spacing:-.55px;margin-left:-.5px">admin</span></div>
<div class="c rh" style="left:0px;top:44px;width:40px">3</div>
<div class="c " style="left:40px;top:44px;width:130px">2010-01-16 22:36:32</div>
<div class="c " style="left:170px;top:44px;width:130px">2010-01-16 22:36:32</div>
<div class="c y" style="left:300px;top:44px;width:60px">2.19</div>
<div class="c y" style="left:360px;top:44px;width:60px">1.73</div>
<div class="c y" style="left:420px;top:44px;width:60px">2.19</div>
<div class="c " style="left:480px;top:44px;width:60px">2.59</div>
<div class="c " style="left:540px;top:44px;width:60px">2.20</div>
<div class="c g r" style="left:600px;top:44px;width:65px">失控</div>
<div class="c g" style="left:665px;top:44px;width:65px">2.180</div>
<div class="c g" style="left:730px;top:44px;width:65px">0.86</div>
<div class="c g" style="left:795px;top:44px;width:65px">0.303890</div>
<div class="c g" style="left:860px;top:44px;width:65px">2.59</div>
<div class="c g" style="left:925px;top:44px;width:65px">1.73</div>
<div class="c g" style="left:990px;top:44px;width:120px"><span style="letter-spacing:-.55px;margin-left:-.5px">admin</span></div>
<div class="c rh" style="left:0px;top:66px;width:40px">4</div>
<div class="c " style="left:40px;top:66px;width:130px">2010-01-16 22:36:33</div>
<div class="c " style="left:170px;top:66px;width:130px">2010-01-16 22:36:33</div>
<div class="c " style="left:300px;top:66px;width:60px">2.22</div>
<div class="c y" style="left:360px;top:66px;width:60px">2.91</div>
<div class="c " style="left:420px;top:66px;width:60px">2.62</div>
<div class="c y" style="left:480px;top:66px;width:60px">2.84</div>
<div class="c y" style="left:540px;top:66px;width:60px">2.17</div>
<div class="c g r" style="left:600px;top:66px;width:65px">失控</div>
<div class="c g" style="left:665px;top:66px;width:65px">2.552</div>
<div class="c g" style="left:730px;top:66px;width:65px">0.74</div>
<div class="c g" style="left:795px;top:66px;width:65px">0.343400</div>
<div class="c g" style="left:860px;top:66px;width:65px">2.91</div>
<div class="c g" style="left:925px;top:66px;width:65px">2.17</div>
<div class="c g" style="left:990px;top:66px;width:120px"><span style="letter-spacing:-.55px;margin-left:-.5px">admin</span></div>
<div class="c rh" style="left:0px;top:88px;width:40px">5</div>
<div class="c " style="left:40px;top:88px;width:130px">2010-01-16 22:36:33</div>
<div class="c " style="left:170px;top:88px;width:130px">2010-01-16 22:36:33</div>
<div class="c " style="left:300px;top:88px;width:60px">2.27</div>
<div class="c " style="left:360px;top:88px;width:60px">2.36</div>
<div class="c " style="left:420px;top:88px;width:60px">2.76</div>
<div class="c y" style="left:480px;top:88px;width:60px">1.99</div>
<div class="c " style="left:540px;top:88px;width:60px">2.36</div>
<div class="c g r" style="left:600px;top:88px;width:65px">失控</div>
<div class="c g" style="left:665px;top:88px;width:65px">2.347</div>
<div class="c g" style="left:730px;top:88px;width:65px">0.77</div>
<div class="c g" style="left:795px;top:88px;width:65px">0.277834</div>
<div class="c g" style="left:860px;top:88px;width:65px">2.76</div>
<div class="c g" style="left:925px;top:88px;width:65px">1.99</div>
<div class="c g" style="left:990px;top:88px;width:120px"><span style="letter-spacing:-.55px;margin-left:-.5px">admin</span></div>
<div class="c rh" style="left:0px;top:110px;width:40px">6</div>
<div class="c " style="left:40px;top:110px;width:130px">2010-01-16 22:36:33</div>
<div class="c " style="left:170px;top:110px;width:130px">2010-01-16 22:36:33</div>
<div class="c " style="left:300px;top:110px;width:60px">2.29</div>
<div class="c " style="left:360px;top:110px;width:60px">2.47</div>
<div class="c y" style="left:420px;top:110px;width:60px">2.08</div>
<div class="c y" style="left:480px;top:110px;width:60px">1.96</div>
<div class="c y" style="left:540px;top:110px;width:60px">2.04</div>
<div class="c g r" style="left:600px;top:110px;width:65px">失控</div>
<div class="c g" style="left:665px;top:110px;width:65px">2.167</div>
<div class="c g" style="left:730px;top:110px;width:65px">0.51</div>
<div class="c g" style="left:795px;top:110px;width:65px">0.209687</div>
<div class="c g" style="left:860px;top:110px;width:65px">2.47</div>
<div class="c g" style="left:925px;top:110px;width:65px">1.96</div>
<div class="c g" style="left:990px;top:110px;width:120px"><span style="letter-spacing:-.55px;margin-left:-.5px">admin</span></div>
<div class="c rh" style="left:0px;top:132px;width:40px">7</div>
<div class="c " style="left:40px;top:132px;width:130px">2010-01-16 22:36:34</div>
<div class="c " style="left:170px;top:132px;width:130px">2010-01-16 22:36:34</div>
<div class="c " style="left:300px;top:132px;width:60px">2.36</div>
<div class="c y" style="left:360px;top:132px;width:60px">1.80</div>
<div class="c y" style="left:420px;top:132px;width:60px">3.34</div>
<div class="c y" style="left:480px;top:132px;width:60px">3.51</div>
<div class="c y" style="left:540px;top:132px;width:60px">2.19</div>
<div class="c g r" style="left:600px;top:132px;width:65px">失控</div>
<div class="c g" style="left:665px;top:132px;width:65px">2.642</div>
<div class="c g" style="left:730px;top:132px;width:65px">1.71</div>
<div class="c g" style="left:795px;top:132px;width:65px">0.747630</div>
<div class="c g" style="left:860px;top:132px;width:65px">3.51</div>
<div class="c g" style="left:925px;top:132px;width:65px">1.81</div>
<div class="c g" style="left:990px;top:132px;width:120px"><span style="letter-spacing:-.55px;margin-left:-.5px">admin</span></div>
<div class="c rh" style="left:0px;top:154px;width:40px">8</div>
<div class="c " style="left:40px;top:154px;width:130px">2010-01-16 22:36:34</div>
<div class="c " style="left:170px;top:154px;width:130px">2010-01-16 22:36:34</div>
<div class="c " style="left:300px;top:154px;width:60px">2.38</div>
<div class="c y" style="left:360px;top:154px;width:60px">1.62</div>
<div class="c y" style="left:420px;top:154px;width:60px">1.89</div>
<div class="c y" style="left:480px;top:154px;width:60px">1.83</div>
<div class="c " style="left:540px;top:154px;width:60px">2.57</div>
<div class="c g r" style="left:600px;top:154px;width:65px">失控</div>
<div class="c g" style="left:665px;top:154px;width:65px">2.057</div>
<div class="c g" style="left:730px;top:154px;width:65px">0.95</div>
<div class="c g" style="left:795px;top:154px;width:65px">0.398035</div>
<div class="c g" style="left:860px;top:154px;width:65px">2.57</div>
<div class="c g" style="left:925px;top:154px;width:65px">1.62</div>
<div class="c g" style="left:990px;top:154px;width:120px"><span style="letter-spacing:-.55px;margin-left:-.5px">admin</span></div>
<div class="c rh" style="left:0px;top:176px;width:40px">9</div>
<div class="c " style="left:40px;top:176px;width:130px">2010-01-16 22:36:34</div>
<div class="c " style="left:170px;top:176px;width:130px">2010-01-16 22:36:34</div>
<div class="c " style="left:300px;top:176px;width:60px">2.41</div>
<div class="c y" style="left:360px;top:176px;width:60px">1.80</div>
<div class="c y" style="left:420px;top:176px;width:60px">1.94</div>
<div class="c " style="left:480px;top:176px;width:60px">2.39</div>
<div class="c " style="left:540px;top:176px;width:60px">2.51</div>
<div class="c g r" style="left:600px;top:176px;width:65px">失控</div>
<div class="c g" style="left:665px;top:176px;width:65px">2.209</div>
<div class="c g" style="left:730px;top:176px;width:65px">0.71</div>
<div class="c g" style="left:795px;top:176px;width:65px">0.318193</div>
<div class="c g" style="left:860px;top:176px;width:65px">2.51</div>
<div class="c g" style="left:925px;top:176px;width:65px">1.80</div>
<div class="c g" style="left:990px;top:176px;width:120px"><span style="letter-spacing:-.55px;margin-left:-.5px">admin</span></div>
<div class="c rh" style="left:0px;top:198px;width:40px">10</div>
<div class="c " style="left:40px;top:198px;width:130px">2010-01-16 22:36:35</div>
<div class="c " style="left:170px;top:198px;width:130px">2010-01-16 22:36:35</div>
<div class="c " style="left:300px;top:198px;width:60px">2.44</div>
<div class="c y" style="left:360px;top:198px;width:60px">2.12</div>
<div class="c y" style="left:420px;top:198px;width:60px">2.09</div>
<div class="c y" style="left:480px;top:198px;width:60px">2.81</div>
<div class="c " style="left:540px;top:198px;width:60px">2.47</div>
<div class="c g r" style="left:600px;top:198px;width:65px">失控</div>
<div class="c g" style="left:665px;top:198px;width:65px">2.385</div>
<div class="c g" style="left:730px;top:198px;width:65px">0.72</div>
<div class="c g" style="left:795px;top:198px;width:65px">0.294946</div>
<div class="c g" style="left:860px;top:198px;width:65px">2.81</div>
<div class="c g" style="left:925px;top:198px;width:65px">2.09</div>
<div class="c g" style="left:990px;top:198px;width:120px"><span style="letter-spacing:-.55px;margin-left:-.5px">admin</span></div>
<div class="c rh" style="left:0px;top:220px;width:40px">11</div>
<div class="c " style="left:40px;top:220px;width:130px">2010-01-16 22:36:35</div>
<div class="c " style="left:170px;top:220px;width:130px">2010-01-16 22:36:35</div>
<div class="c " style="left:300px;top:220px;width:60px">2.45</div>
<div class="c y" style="left:360px;top:220px;width:60px">1.93</div>
<div class="c " style="left:420px;top:220px;width:60px">2.60</div>
<div class="c " style="left:480px;top:220px;width:60px">2.55</div>
<div class="c y" style="left:540px;top:220px;width:60px">1.94</div>
<div class="c g r" style="left:600px;top:220px;width:65px">失控</div>
<div class="c g" style="left:665px;top:220px;width:65px">2.294</div>
<div class="c g" style="left:730px;top:220px;width:65px">0.67</div>
<div class="c g" style="left:795px;top:220px;width:65px">0.321062</div>
<div class="c g" style="left:860px;top:220px;width:65px">2.60</div>
<div class="c g" style="left:925px;top:220px;width:65px">1.93</div>
<div class="c g" style="left:990px;top:220px;width:120px"><span style="letter-spacing:-.55px;margin-left:-.5px">admin</span></div>
</div>
<div class="abs" style="left:1348px;top:476px;width:15px;height:250px;background:#f0f0f0"></div>
<div class="abs" style="left:1348px;top:493px;width:15px;height:144px;background:#cdcdcd"></div>
<svg class="abs" style="left:1348px;top:476px" width="16" height="251" viewBox="0 0 16 251" fill="none" stroke="#505050" stroke-width="1.4">
<path d="M4 11l3.5-3.5l3.5 3.5"/><path d="M4 240.5l3.5 3.5l3.5-3.5"/></svg>
<div class="abs" style="left:963px;top:543px;width:85px;height:22px;background:#fff;border:1px solid #767676;color:#505050;font-size:12.4px;line-height:20px;padding-left:5px;white-space:nowrap;letter-spacing:.15px">截图(Alt + A)</div>
<div class="abs" style="left:0;top:728px;width:1366px;height:8px;background:#1c1c1c"></div>
<div class="abs" style="left:540px;top:728px;width:48px;height:8px;background:#414141"></div>
<div class="abs" style="left:1361px;top:728px;width:1px;height:8px;background:#5a5a5a"></div>
<div class="abs" style="left:1261px;top:732.5px;width:40px;height:3.5px;overflow:hidden;color:#fff;font-size:12px;line-height:14px;letter-spacing:.4px">16:51</div>
</body></html>
